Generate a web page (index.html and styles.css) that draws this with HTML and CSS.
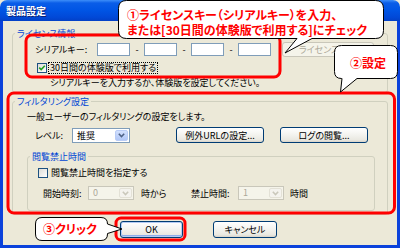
FILE: index.html
```html
<!DOCTYPE html>
<html>
  <head>
    <meta charset="UTF-8" />
    <title>製品設定</title>
    <link rel="stylesheet" href="styles.css">
  </head>
  <body>
    <div class="window">
      <div class="titlebar"><span class="title">製品設定</span></div>

      <div class="client">
        <!-- ライセンス情報 -->
        <fieldset class="group license">
          <legend>ライセンス情報</legend>
          <div class="group-body">
            <div class="row serial-row">
              <span class="serial-label">シリアルキー:</span>
              <span class="key"></span><span class="dash">-</span>
              <span class="key"></span><span class="dash">-</span>
              <span class="key"></span><span class="dash">-</span>
              <span class="key"></span>
              <span class="btn disabled auth-btn">ライセンス認証</span>
            </div>
            <div class="row check-row">
              <span class="checkbox">
                <svg width="8" height="8" viewBox="0 0 8 8"><path d="M1.2 3.6 L3.2 5.6 L6.8 1.8" fill="none" stroke="#21A121" stroke-width="1.6"/></svg>
              </span>
              <span class="check-label focus">30日間の体験版で利用する</span>
            </div>
            <div class="hint">シリアルキーを入力するか、体験版を設定してください。</div>
          </div>
        </fieldset>

        <!-- フィルタリング設定 -->
        <fieldset class="group filter">
          <legend>フィルタリング設定</legend>
          <div class="group-body">
            <div class="filter-text">一般ユーザーのフィルタリングの設定をします。</div>
            <div class="row level-row">
              <span class="level-label">レベル:</span>
              <span class="select level-select">
                <span class="select-value">推奨</span>
                <span class="select-arrow">
                  <svg width="7" height="5" viewBox="0 0 7 5"><path d="M0.8 0.8 L3.5 3.6 L6.2 0.8" fill="none" stroke="#4D6185" stroke-width="1.5"/></svg>
                </span>
              </span>
              <span class="btn url-btn">例外URLの設定...</span>
              <span class="btn log-btn">ログの閲覧...</span>
            </div>

            <fieldset class="group sub">
              <legend>閲覧禁止時間</legend>
              <div class="sub-body">
                <div class="row check-row">
                  <span class="checkbox"></span>
                  <span class="check-label">閲覧禁止時間を指定する</span>
                </div>
                <div class="row time-row">
                  <span class="start-label">開始時刻:</span>
                  <span class="select disabled time-select">
                    <span class="select-value">0</span>
                    <span class="select-arrow">
                      <svg width="7" height="5" viewBox="0 0 7 5"><path d="M0.8 0.8 L3.5 3.6 L6.2 0.8" fill="none" stroke="#C9C7BA" stroke-width="1.5"/></svg>
                    </span>
                  </span>
                  <span class="from-label">時から</span>
                  <span class="len-label">禁止時間:</span>
                  <span class="select disabled time-select">
                    <span class="select-value">1</span>
                    <span class="select-arrow">
                      <svg width="7" height="5" viewBox="0 0 7 5"><path d="M0.8 0.8 L3.5 3.6 L6.2 0.8" fill="none" stroke="#C9C7BA" stroke-width="1.5"/></svg>
                    </span>
                  </span>
                  <span class="hours-label">時間</span>
                </div>
              </div>
            </fieldset>
          </div>
        </fieldset>

        <div class="buttons">
          <span class="btn default ok-btn">OK</span>
          <span class="btn cancel-btn">キャンセル</span>
        </div>
      </div>

      <!-- 注釈 -->
      <svg class="marks" width="400" height="248" viewBox="0 0 400 248">
        <g fill="none" stroke="#FF0000" stroke-width="3">
          <rect x="26" y="35" width="254" height="42" rx="6" />
          <rect x="8" y="93" width="386.5" height="120" rx="6" />
          <rect x="116" y="218" width="69" height="22" rx="5" />
        </g>
        <g fill="#FFFFFF" stroke="#000000" stroke-width="1">
          <path d="M126.5 0.5 H375.5 Q383.5 0.5 383.5 8.5 V30.5 Q383.5 38.5 375.5 38.5 H312 L285 53 L297 38.5 H126.5 Q118.5 38.5 118.5 30.5 V8.5 Q118.5 0.5 126.5 0.5 Z" />
          <path d="M341.5 45.5 H390.5 Q397.5 45.5 397.5 52.5 V71.5 Q397.5 78.5 390.5 78.5 H357 L340.5 92 L342 78.5 H341.5 Q334.5 78.5 334.5 71.5 V52.5 Q334.5 45.5 341.5 45.5 Z" />
          <path d="M42 217.5 H101 Q107.5 217.5 107.5 224 L122 229 L107.5 233.5 V234 Q107.5 240.5 101 240.5 H42 Q35.5 240.5 35.5 234 V224 Q35.5 217.5 42 217.5 Z" />
        </g>
      </svg>
      <div class="note note-1">①ライセンスキー（シリアルキー）を入力、<br>または[30日間の体験版で利用する]にチェック</div>
      <div class="note note-2">②設定</div>
      <div class="note note-3">③クリック</div>
    </div>
  </body>
</html>
```

FILE: styles.css
```css
* {
  margin: 0;
  padding: 0;
  box-sizing: border-box;
}

body {
  font-family: "Noto Sans CJK JP", sans-serif;
  font-size: 9px;
  font-feature-settings: "palt";
  color: #000;
  background: #ECE9D8;
}

.window {
  position: relative;
  width: 400px;
  height: 248px;
  display: flex;
  flex-direction: column;
  overflow: hidden;
}

.titlebar {
  flex: none;
  height: 21px;
  display: flex;
  align-items: center;
  padding-left: 6px;
  border-radius: 7px 7px 0 0;
  background: linear-gradient(#3D8EF9 0, #0A5DE8 3px, #0055E5 10px, #0149D8 17px, #0340C6 21px);
}

.title {
  color: #fff;
  font-size: 10px;
  font-weight: bold;
  line-height: 12px;
  text-shadow: 1px 1px 0 #0A1F75;
}

.client {
  flex: 1;
  border: 3px solid #0B42DB;
  border-top: 0;
  padding: 7px 9px 0 9px;
  background: #ECE9D8;
}

.group {
  border: 1px solid #D0D0BF;
  border-radius: 3px;
  min-width: 0;
}

.group legend {
  margin-left: 2px;
  padding: 0 2px;
  color: #0046D5;
  line-height: 11px;
}

.row {
  display: flex;
  align-items: center;
}

/* license */
.license .group-body {
  padding: 3px 10px 4px 22px;
}

.serial-row {
  height: 14px;
}

.serial-label {
  width: 62px;
}

.key {
  width: 33px;
  height: 13px;
  background: #fff;
  border: 1px solid #7F9DB9;
}

.dash {
  width: 14px;
  text-align: center;
}

.auth-btn {
  margin-left: 11px;
  width: 92px;
  height: 15px;
}

.check-row {
  height: 11px;
  margin-top: 6px;
  padding-left: 2px;
}

.checkbox {
  width: 10px;
  height: 10px;
  border: 1px solid #1C5180;
  background: linear-gradient(135deg, #DCDCD7, #fff);
  display: flex;
  align-items: center;
  justify-content: center;
}

.check-label {
  margin-left: 1px;
  padding: 0 1px;
  line-height: 10px;
  border: 1px solid transparent;
}

.check-label.focus {
  border: 1px dotted #000;
}

.hint {
  margin-top: 4px;
  padding-left: 15px;
  line-height: 11px;
}

/* filter */
.filter {
  margin-top: 3px;
}

.filter .group-body {
  padding: 4px 12px 3px 14px;
}

.filter-text {
  line-height: 11px;
}

.level-row {
  height: 16px;
  margin-top: 5px;
  padding-left: 8px;
}

.level-label {
  width: 37px;
}

.select {
  display: flex;
  height: 15px;
  background: #fff;
  border: 1px solid #7F9DB9;
}

.select-value {
  flex: 1;
  padding-left: 4px;
  line-height: 13px;
}

.select-arrow {
  width: 13px;
  margin: 1px;
  border: 1px solid #B9CCF6;
  border-radius: 2px;
  background: linear-gradient(#D2E0FD, #B1C7F7);
  display: flex;
  align-items: center;
  justify-content: center;
}

.level-select {
  width: 58px;
}

.select.disabled {
  background: #F5F4EA;
  border-color: #C9C7BA;
  color: #ACA899;
}

.select.disabled .select-arrow {
  border-color: #E3E1D6;
  background: #F4F3EE;
}

.btn {
  display: flex;
  align-items: center;
  justify-content: center;
  border: 1px solid #003C74;
  border-radius: 3px;
  background: linear-gradient(#FFFFFF, #F4F4F0 45%, #E9E8E1 85%, #D8D3C8);
}

.btn.disabled {
  border-color: #C9C7BA;
  background: #F5F4EA;
  color: #ACA899;
}

.url-btn {
  margin-left: 46px;
  width: 88px;
  height: 16px;
}

.log-btn {
  margin-left: 16px;
  width: 88px;
  height: 16px;
}

.sub {
  margin-top: 8px;
}

.sub-body {
  padding: 5px 0 10px 10px;
}

.sub .check-row {
  margin-top: 0;
  padding-left: 0;
}

.time-row {
  height: 14px;
  margin-top: 8px;
  padding-left: 5px;
}

.start-label {
  width: 45px;
}

.time-select {
  width: 46px;
  height: 14px;
}

.time-select .select-value {
  line-height: 12px;
}

.from-label {
  margin-left: 7px;
  width: 50px;
}

.len-label {
  width: 47px;
}

.hours-label {
  margin-left: 6px;
}

/* bottom buttons */
.buttons {
  display: flex;
  justify-content: center;
  gap: 30px;
  margin-top: 6px;
  padding-right: 3px;
}

.ok-btn {
  width: 63px;
  height: 17px;
}

.btn.default {
  box-shadow: inset 0 0 0 1px #B4CBF3, inset 0 -1px 0 1px #8DADEB;
}

.cancel-btn {
  width: 64px;
  height: 17px;
}

/* annotations */
.marks {
  position: absolute;
  left: 0;
  top: 0;
}

.note {
  position: absolute;
  color: #FF0000;
  font-size: 12px;
  font-weight: bold;
  line-height: 15px;
  white-space: nowrap;
}

.note-1 {
  left: 127px;
  top: 7px;
}

.note-2 {
  left: 350px;
  top: 55px;
}

.note-3 {
  left: 43px;
  top: 221px;
}
```
